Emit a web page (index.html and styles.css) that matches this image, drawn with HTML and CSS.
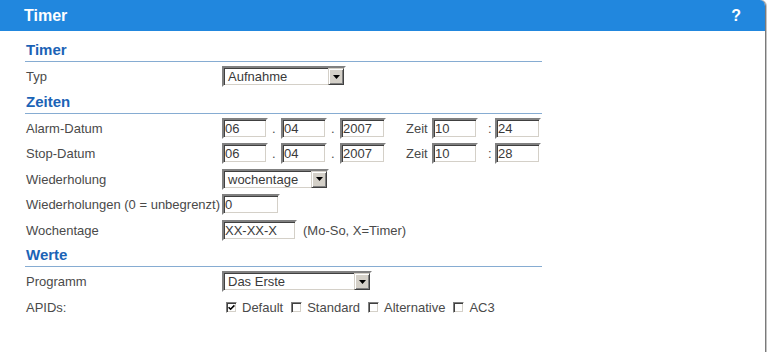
FILE: index.html
```html
<!DOCTYPE html>
<html lang="de">
<head>
<meta charset="utf-8">
<title>Timer</title>
<link rel="stylesheet" href="styles.css">
</head>
<body>
<div class="window">
  <div class="titlebar"><span class="title">Timer</span><span class="help">?</span></div>
  <div class="content">
    <h2 class="sec sec-first">Timer</h2>
    <div class="row">
      <div class="lbl">Typ</div>
      <div class="ctl">
        <div class="select w-typ"><span class="val">Aufnahme</span><span class="btn"><svg width="7" height="4" viewBox="0 0 7 4"><path d="M0 0H7L3.5 4Z" fill="#000"/></svg></span></div>
      </div>
    </div>

    <h2 class="sec">Zeiten</h2>
    <div class="row">
      <div class="lbl">Alarm-Datum</div>
      <div class="ctl">
        <span class="inp w-date">06</span><span class="dot">.</span><span class="inp w-date">04</span><span class="dot">.</span><span class="inp w-date">2007</span><span class="zeit">Zeit</span><span class="inp w-date">10</span><span class="colon">:</span><span class="inp w-date">24</span>
      </div>
    </div>
    <div class="row">
      <div class="lbl">Stop-Datum</div>
      <div class="ctl">
        <span class="inp w-date">06</span><span class="dot">.</span><span class="inp w-date">04</span><span class="dot">.</span><span class="inp w-date">2007</span><span class="zeit">Zeit</span><span class="inp w-date">10</span><span class="colon">:</span><span class="inp w-date">28</span>
      </div>
    </div>
    <div class="row">
      <div class="lbl">Wiederholung</div>
      <div class="ctl">
        <div class="select w-wied"><span class="val">wochentage</span><span class="btn"><svg width="7" height="4" viewBox="0 0 7 4"><path d="M0 0H7L3.5 4Z" fill="#000"/></svg></span></div>
      </div>
    </div>
    <div class="row">
      <div class="lbl">Wiederholungen (0 = unbegrenzt)</div>
      <div class="ctl"><span class="inp w-num">0</span></div>
    </div>
    <div class="row">
      <div class="lbl">Wochentage</div>
      <div class="ctl"><span class="inp w-wt">XX-XX-X</span><span class="hint">(Mo-So, X=Timer)</span></div>
    </div>

    <h2 class="sec">Werte</h2>
    <div class="row">
      <div class="lbl">Programm</div>
      <div class="ctl">
        <div class="select w-prog"><span class="val">Das Erste</span><span class="btn"><svg width="7" height="4" viewBox="0 0 7 4"><path d="M0 0H7L3.5 4Z" fill="#000"/></svg></span></div>
      </div>
    </div>
    <div class="row">
      <div class="lbl">APIDs:</div>
      <div class="ctl">
        <span class="cb"><svg width="7" height="7" viewBox="0 0 7 7"><path d="M0.6 3.2L2.6 5.2L6.4 1.4" fill="none" stroke="#000" stroke-width="1.6"/></svg></span><span class="cbl">Default</span>
        <span class="cb"></span><span class="cbl">Standard</span>
        <span class="cb"></span><span class="cbl">Alternative</span>
        <span class="cb"></span><span class="cbl">AC3</span>
      </div>
    </div>
  </div>
</div>
</body>
</html>
```
FILE: styles.css
```css
html, body {
  margin: 0;
  padding: 0;
  background: #fff;
}
body {
  font-family: "Liberation Sans", Arial, sans-serif;
  font-size: 13px;
  color: #4a4a4a;
}
.window {
  width: 765px;
  height: 352px;
  border-right: 1px solid #7a7a7a;
  box-shadow: 1px 0 0 #c4c4c4;
  border-top-right-radius: 6px;
  overflow: hidden;
}
.titlebar {
  height: 31px;
  background: #2187de;
  display: flex;
  align-items: center;
  justify-content: space-between;
  padding: 0 24px 0 24px;
  color: #fff;
  font-weight: bold;
  font-size: 16px;
}
.content {
  padding-left: 25px;
  width: 517px;
}
.sec {
  margin: 0 0 2px 0;
  font-size: 15px;
  font-weight: bold;
  color: #1b63b6;
  line-height: 20px;
  padding: 2px 0 1px 1px;
  border-bottom: 1px solid #86acd2;
}
.sec-first {
  margin-top: 7px;
}
.row {
  display: flex;
  align-items: center;
  height: 25.5px;
}
.lbl {
  width: 196px;
  padding-left: 1px;
  white-space: nowrap;
}
.ctl {
  display: flex;
  align-items: center;
}
.inp {
  box-sizing: border-box;
  display: inline-block;
  height: 21px;
  border: 2px solid;
  border-color: #808080 #fff #fff #808080;
  box-shadow: inset 1px 1px 0 #404040, inset -1px -1px 0 #d4d0c8;
  padding-left: 1px;
  line-height: 17px;
  background: #fff;
  color: #3a3a3a;
}
.w-date { width: 46px; }
.w-num { width: 58px; }
.w-wt { width: 75px; }
.dot {
  width: 13px;
  padding-left: 4px;
  box-sizing: border-box;
}
.zeit {
  margin-left: 20px;
  width: 26px;
}
.colon {
  margin-left: 10px;
  width: 7px;
}
.hint {
  margin-left: 6px;
}
.select {
  box-sizing: border-box;
  display: flex;
  align-items: center;
  height: 21px;
  border: 2px solid;
  border-color: #808080 #fff #fff #808080;
  box-shadow: inset 1px 1px 0 #404040, inset -1px -1px 0 #d4d0c8;
  background: #fff;
  color: #3a3a3a;
}
.w-typ { width: 124px; }
.w-wied { width: 107px; }
.w-prog { width: 150px; }
.val {
  flex: 1;
  padding-left: 4px;
  white-space: nowrap;
}
.btn {
  box-sizing: border-box;
  width: 16px;
  height: 17px;
  background: #d4d0c8;
  border: 1px solid;
  border-color: #d4d0c8 #404040 #404040 #d4d0c8;
  box-shadow: inset 1px 1px 0 #fff, inset -1px -1px 0 #808080;
  display: flex;
  align-items: center;
  justify-content: center;
}
.btn svg {
  display: block;
}
.cb {
  box-sizing: border-box;
  width: 11px;
  height: 11px;
  margin: 1px 5px 0 4px;
  border: 1px solid;
  border-color: #808080 #fff #fff #808080;
  box-shadow: inset 1px 1px 0 #404040, inset -1px -1px 0 #d4d0c8;
  background: #fff;
  display: flex;
  align-items: center;
  justify-content: center;
}
.cb svg {
  display: block;
}
.cbl {
  margin-right: 4px;
  line-height: 15px;
}
```
